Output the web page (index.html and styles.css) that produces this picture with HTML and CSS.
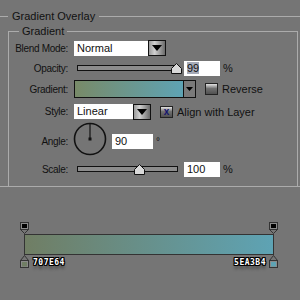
FILE: index.html
```html
<!DOCTYPE html>
<html lang="en">
<head>
  <meta charset="UTF-8">
  <title>Gradient Overlay</title>
  <link rel="stylesheet" href="styles.css">
</head>
<body>
  <fieldset class="group overlay">
    <legend>Gradient Overlay</legend>
    <fieldset class="group gradient-box">
      <legend>Gradient</legend>
      <div class="form">
        <div class="label">Blend Mode:</div>
        <div class="field">
          <div class="select wide">
            <div class="select-value">Normal</div>
            <div class="select-btn">
              <svg width="10" height="6" viewBox="0 0 10 6"><path d="M0 0 H10 L5 6 Z" fill="#000"/></svg>
            </div>
          </div>
        </div>

        <div class="label">Opacity:</div>
        <div class="field">
          <div class="slider">
            <div class="track"></div>
            <svg class="thumb" style="left: 94px" width="11" height="11" viewBox="0 0 11 11"><path d="M5.5 0.5 L10.5 5.5 V10.5 H0.5 V5.5 Z" fill="#d9d9d9" stroke="#111"/></svg>
          </div>
          <div class="num"><span class="sel">99</span></div>
          <span class="unit">%</span>
        </div>

        <div class="label">Gradient:</div>
        <div class="field">
          <div class="grad-pick">
            <div class="grad-swatch"></div>
            <div class="grad-arrow">
              <svg width="7" height="4" viewBox="0 0 7 4"><path d="M0 0 H7 L3.5 4 Z" fill="#000"/></svg>
            </div>
          </div>
          <div class="check reverse"></div>
          <span class="check-text">Reverse</span>
        </div>

        <div class="label">Style:</div>
        <div class="field">
          <div class="select narrow">
            <div class="select-value">Linear</div>
            <div class="select-btn">
              <svg width="10" height="6" viewBox="0 0 10 6"><path d="M0 0 H10 L5 6 Z" fill="#000"/></svg>
            </div>
          </div>
          <div class="check align"><span>x</span></div>
          <span class="check-text">Align with Layer</span>
        </div>

        <div class="label">Angle:</div>
        <div class="field">
          <svg class="dial" width="34" height="34" viewBox="0 0 34 34">
            <circle cx="17" cy="17" r="15.5" fill="none" stroke="#111" stroke-width="1.6"/>
            <path d="M17 17 V2" stroke="#111" stroke-width="1.2"/>
            <rect x="15.5" y="15.5" width="3" height="3" fill="#111"/>
          </svg>
          <div class="num angle">90</div>
          <span class="deg">°</span>
        </div>

        <div class="label">Scale:</div>
        <div class="field">
          <div class="slider">
            <div class="track"></div>
            <svg class="thumb" style="left: 57px" width="11" height="11" viewBox="0 0 11 11"><path d="M5.5 0.5 L10.5 5.5 V10.5 H0.5 V5.5 Z" fill="#d9d9d9" stroke="#111"/></svg>
          </div>
          <div class="num">100</div>
          <span class="unit">%</span>
        </div>
      </div>
    </fieldset>
  </fieldset>

  <div class="editor">
    <div class="stops">
      <svg width="9" height="12" viewBox="0 0 9 12"><rect x="0.5" y="0.5" width="8" height="7" fill="#8a8a8a" stroke="#333"/><rect x="2" y="2" width="5" height="4" fill="#000"/><path d="M0.5 7.5 L4.5 11.5 L8.5 7.5" fill="none" stroke="#333"/></svg>
      <svg width="9" height="12" viewBox="0 0 9 12"><rect x="0.5" y="0.5" width="8" height="7" fill="#8a8a8a" stroke="#333"/><rect x="2" y="2" width="5" height="4" fill="#000"/><path d="M0.5 7.5 L4.5 11.5 L8.5 7.5" fill="none" stroke="#333"/></svg>
    </div>
    <div class="bar"></div>
    <div class="stops bottom">
      <svg width="9" height="13" viewBox="0 0 9 13"><path d="M0.5 5.5 L4.5 0.5 L8.5 5.5" fill="none" stroke="#333"/><rect x="0.5" y="5.5" width="8" height="7" fill="#8a8a8a" stroke="#333"/><rect x="2" y="7" width="5" height="4.5" fill="#707E64"/></svg>
      <span class="hex">707E64</span>
      <span class="spacer"></span>
      <span class="hex">5EA3B4</span>
      <svg width="9" height="13" viewBox="0 0 9 13"><path d="M0.5 5.5 L4.5 0.5 L8.5 5.5" fill="none" stroke="#333"/><rect x="0.5" y="5.5" width="8" height="7" fill="#8a8a8a" stroke="#333"/><rect x="2" y="7" width="5" height="4.5" fill="#5EA3B4"/></svg>
    </div>
  </div>
</body>
</html>
```

FILE: styles.css
```css
html, body { height: 100%; }
body {
  margin: 0;
  background: #757575;
  font-family: "Liberation Sans", Arial, sans-serif;
  font-size: 10px;
  color: #111;
  overflow: hidden;
}

.group { border: 1px solid #ababab; margin: 0; min-width: 0; }
.group legend { padding: 0 4px; font-size: 11px; line-height: 14px; color: #111; }
.overlay { margin: 9px -4px 0; padding: 0 5px 0 11px; }
.gradient-box { margin: 1px 0 0; padding: 0 0 7px; border-bottom: none; }
.gradient-box legend { margin-left: 10px; padding: 0 3px; }

.form {
  display: grid;
  grid-template-columns: 59px 1fr;
  grid-template-rows: 20px 20px 22px 23px 36px 20px;
  column-gap: 6px;
  align-items: center;
}
.label { text-align: right; color: #111; white-space: nowrap; letter-spacing: -0.3px; }
.field { display: flex; align-items: center; color: #111; }

.select { display: flex; align-items: center; }
.select-value {
  height: 15px;
  line-height: 15px;
  box-sizing: border-box;
  padding-left: 3px;
  background: #fff;
  font-size: 11px;
}
.wide .select-value { width: 74px; }
.narrow .select-value { width: 59px; }
.select-btn {
  width: 18px;
  height: 16px;
  box-sizing: border-box;
  border: 1px solid #111;
  background: linear-gradient(90deg, #9a9a9a, #d0d0d0 35%, #6a6a6a);
  display: flex;
  align-items: center;
  justify-content: center;
}

.slider { position: relative; width: 101px; height: 12px; margin-left: 3px; }
.track {
  position: absolute;
  left: 0; right: 0; top: 3px;
  height: 6px;
  box-sizing: border-box;
  border: 1px solid #111;
  background: #8c8c8c;
}
.thumb { position: absolute; top: 1px; }

.num {
  width: 36px;
  height: 15px;
  line-height: 15px;
  box-sizing: border-box;
  padding-left: 3px;
  margin-left: 6px;
  background: #fff;
  font-size: 11px;
}
.sel { background: #a6abb8; }
.unit { margin-left: 3px; font-size: 11px; }
.deg { margin-left: 3px; align-self: flex-start; margin-top: 10px; }

.grad-pick { display: flex; }
.grad-swatch {
  width: 110px;
  height: 18px;
  box-sizing: border-box;
  border: 1px solid #111;
  background: linear-gradient(90deg, #788a68, #5ea3b4);
}
.grad-arrow {
  width: 12px;
  height: 18px;
  box-sizing: border-box;
  border: 1px solid #111;
  border-left: none;
  background: #7a7a7a;
  display: flex;
  align-items: center;
  justify-content: center;
}

.check {
  width: 13px;
  height: 12px;
  box-sizing: border-box;
  border: 1px solid #222;
  background: linear-gradient(#e4e4e4, #707070 45%, #505050);
  display: flex;
  align-items: center;
  justify-content: center;
}
.reverse { margin-left: 9px; }
.align { margin-left: 9px; }
.align span { color: #14146e; font-weight: bold; font-size: 10px; line-height: 10px; }
.check-text { margin-left: 4px; font-size: 11px; }

.dial { margin-left: -1px; margin-top: -4px; }
.angle { width: 41px; margin-left: 5px; }

.editor { margin: 35px 0 0 20px; width: 258px; }
.stops { display: flex; justify-content: space-between; align-items: flex-start; }
.stops svg { display: block; }
.bar {
  height: 21px;
  margin: 0 4px;
  box-sizing: border-box;
  border: 1px solid #333;
  background: linear-gradient(90deg, #707e64, #5ea3b4);
}
.bottom { align-items: flex-start; }
.spacer { flex: 1; }
.hex {
  margin: 4px 3px 0 4px;
  font-family: "DejaVu Sans Mono", monospace;
  font-weight: bold;
  font-size: 8px;
  line-height: 7px;
  letter-spacing: 0.5px;
  color: #fff;
  text-shadow: 1px 0 0 #000, -1px 0 0 #000, 0 1px 0 #000, 0 -1px 0 #000, 1px 1px 0 #000, -1px -1px 0 #000, 1px -1px 0 #000, -1px 1px 0 #000, 0 4px 3px rgba(0,0,0,.45);
}
```
